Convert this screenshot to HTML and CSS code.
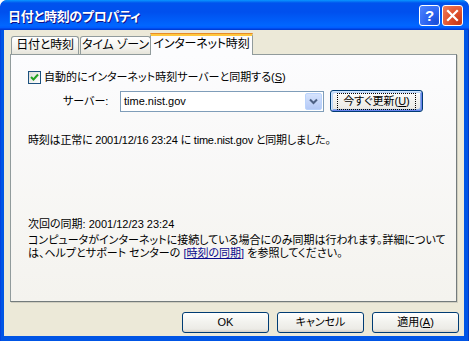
FILE: index.html
```html
<!DOCTYPE html>
<html lang="ja">
<head>
<meta charset="utf-8">
<title>日付と時刻のプロパティ</title>
<link rel="stylesheet" href="styles.css">
</head>
<body>
<div class="window">
  <div class="titlebar">
    <span class="title">日付と時刻のプロパティ</span>
    <div class="tb-buttons">
      <span class="tb help">?</span>
      <span class="tb close"><svg width="13" height="13" viewBox="0 0 13 13"><path d="M2 2 L11 11 M11 2 L2 11" stroke="#fff" stroke-width="2.2" stroke-linecap="square"/></svg></span>
    </div>
  </div>
  <div class="client">
    <div class="tabs">
      <div class="tab">日付と時刻</div>
      <div class="tab">タイム ゾーン</div>
      <div class="tab active">インターネット時刻</div>
    </div>
    <div class="panel">
      <div class="check-row">
        <span class="checkbox"><svg width="9" height="9" viewBox="0 0 9 9"><path d="M1 4 L3.5 6.5 L8 1.5" fill="none" stroke="#21a121" stroke-width="2"/></svg></span>
        <span class="label">自動的にインターネット時刻サーバーと同期する(<u>S</u>)</span>
      </div>
      <div class="server-row">
        <span class="server-label">サーバー:</span>
        <div class="combo">
          <span class="combo-text">time.nist.gov</span>
          <span class="combo-btn"><svg width="9" height="7" viewBox="0 0 9 7"><path d="M1 1.5 L4.5 5 L8 1.5" fill="none" stroke="#4d6185" stroke-width="2"/></svg></span>
        </div>
        <button class="btn default"><span class="focus">今すぐ更新(<u>U</u>)</span></button>
      </div>
      <p class="status">時刻は正常に 2001/12/16 23:24 に time.nist.gov と同期しました。</p>
      <p class="next">次回の同期: 2001/12/23 23:24</p>
      <p class="note">コンピュータがインターネットに接続している場合にのみ同期は行われます。詳細について<br>は、ヘルプとサポート センターの <span class="linkwrap">[<a class="link">時刻の同期</a>]</span> を参照してください。</p>
    </div>
    <div class="buttons">
      <button class="btn">OK</button>
      <button class="btn">キャンセル</button>
      <button class="btn">適用(<u>A</u>)</button>
    </div>
  </div>
</div>
</body>
</html>
```

FILE: styles.css
```css
* { box-sizing: border-box; }
html, body { margin: 0; padding: 0; background: #fff; }
body {
  font-family: "Liberation Sans", "Noto Sans CJK JP", sans-serif;
  font-size: 11px;
  line-height: 13px;
  color: #000;
  font-feature-settings: "palt";
}
.window {
  width: 469px;
  height: 341px;
  display: flex;
  flex-direction: column;
  background: linear-gradient(90deg, #0831d9 0, #0055e5 1px, #0055e5 calc(100% - 1px), #001ea0 100%);
  border-radius: 7px 7px 0 0;
  overflow: hidden;
}
.titlebar {
  height: 30px;
  flex: none;
  display: flex;
  align-items: center;
  padding: 0 6px 0 8px;
  background: linear-gradient(180deg, #0997ff 0, #0053ee 10%, #0050ee 40%, #0066ff 85%, #005bff 93%, #003dd7 97%, #003dd7 100%);
  border-radius: 7px 7px 0 0;
}
.title {
  flex: 1;
  color: #fff;
  font-family: "Noto Sans CJK JP", sans-serif;
  font-weight: bold;
  font-size: 13px;
  text-shadow: 1px 1px #0f1089;
  letter-spacing: -0.3px;
}
.tb-buttons { display: flex; gap: 2px; margin-top: 1px; }
.tb {
  width: 21px;
  height: 21px;
  border: 1px solid #fff;
  border-radius: 3px;
  display: flex;
  align-items: center;
  justify-content: center;
  color: #fff;
}
.help {
  background: radial-gradient(circle at 85% 85%, #1a4ed8 0, #2b63f0 40%, #4f85ff 100%);
  font-family: "Liberation Sans", sans-serif;
  font-weight: bold;
  font-size: 15px;
}
.close {
  background: radial-gradient(circle at 85% 85%, #c7381a 0, #e0502b 45%, #f08060 100%);
}
.client {
  flex: 1;
  margin: 0 5px 5px 4px;
  background: #ece9d8;
  display: flex;
  flex-direction: column;
  padding: 3px 5px 3px 6px;
}
.tabs {
  display: flex;
  align-items: flex-end;
  height: 21px;
  padding-left: 1px;
  position: relative;
  z-index: 1;
}
.tab {
  height: 18px;
  padding: 0;
  margin-right: 1px;
  border: 1px solid #919b9c;
  border-bottom: none;
  border-radius: 3px 3px 0 0;
  background: linear-gradient(#ffffff, #f4f3ee 60%, #e6e4da);
  font-size: 12px;
  line-height: 17px;
  text-align: center;
  white-space: nowrap;
  letter-spacing: -0.2px;
}
.tab:nth-child(1) { width: 68px; }
.tab:nth-child(2) { width: 71px; margin-right: 0; }
.tab.active {
  height: 22px;
  width: 103px;
  margin-left: -1px;
  margin-bottom: -1px;
  background: #fcfcfe;
  border-top: 3px solid #ffc73c;
  line-height: 17px;
  position: relative;
}
.tab.active::before {
  content: "";
  position: absolute;
  left: -1px;
  right: -1px;
  top: -3px;
  height: 1px;
  background: #e68b2c;
  border-radius: 3px 3px 0 0;
}
.panel {
  flex: 1;
  margin-right: 2px;
  border: 1px solid #919b9c;
  border-right-color: #737b7c;
  border-bottom-color: #737b7c;
  background: linear-gradient(#fcfcfe, #f4f3ee);
  padding: 15px 0 0 17px;
  display: flex;
  flex-direction: column;
  box-shadow: 1px 1px 0 #d0cec0;
}
.check-row {
  display: flex;
  align-items: center;
  height: 15px;
}
.checkbox {
  width: 13px;
  height: 13px;
  border: 1px solid #1c5180;
  background: linear-gradient(135deg, #dcdcd7, #ffffff);
  display: flex;
  align-items: center;
  justify-content: center;
  margin-right: 3px;
}
.server-row {
  display: flex;
  align-items: center;
  height: 22px;
  margin-top: 5px;
  padding-left: 35px;
}
.server-label { width: 57px; }
.combo {
  width: 204px;
  height: 21px;
  border: 1px solid #7f9db9;
  background: #fff;
  display: flex;
  align-items: center;
  padding: 1px;
}
.combo-text { flex: 1; padding-left: 2px; }
.combo-btn {
  width: 17px;
  height: 17px;
  border: 1px solid #bad3fc;
  border-radius: 2px;
  background: linear-gradient(#d6e3fd, #b4c9f6);
  display: flex;
  align-items: center;
  justify-content: center;
}
.btn {
  font: inherit;
  font-feature-settings: "palt";
  color: #000;
  height: 22px;
  border: 1px solid #003c74;
  border-radius: 3px;
  background: linear-gradient(#ffffff, #f3f3ef 45%, #ecebe6 85%, #d6d0c5);
  display: flex;
  align-items: center;
  justify-content: center;
  padding: 0;
}
.default {
  width: 93px;
  margin-left: 6px;
  box-shadow: inset 1px 1px 0 #cee7ff, inset -1px -1px 0 #6982ee, inset 2px 2px 0 #bcd4f6, inset -2px -2px 0 #89ade4;
}
.focus {
  outline: 1px dotted #000;
  outline-offset: 1px;
  padding: 0 4px;
  line-height: 13px;
}
.status { margin: 22px 0 0; letter-spacing: -0.2px; }
.next { margin: 71px 0 0; }
.note { margin: 3px 0 0; }
.linkwrap { color: #0a0a8c; }
.link { color: #0a0a8c; text-decoration: underline; }
.buttons {
  display: flex;
  justify-content: flex-end;
  gap: 8px;
  margin-top: 10px;
}
.buttons .btn { width: 87px; height: 21px; }
u { text-decoration: underline; }
```
